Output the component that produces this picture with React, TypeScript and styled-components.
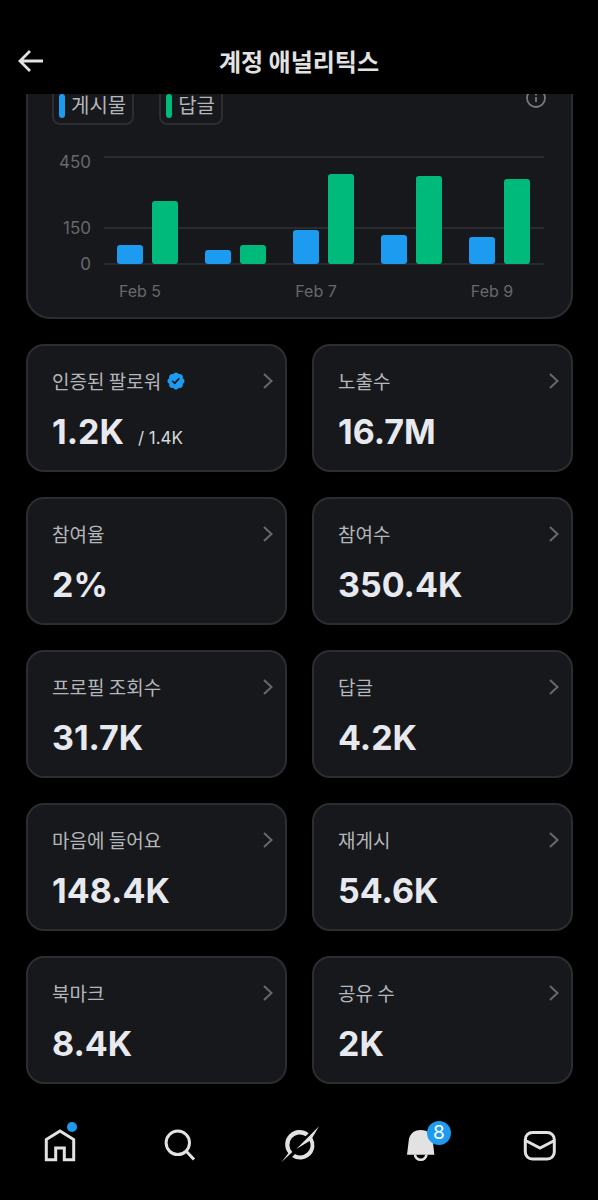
import React from "react";
import styled, { createGlobalStyle } from "styled-components";

const BLUE = "#1d9bf0";
const GREEN = "#00ba7c";

const GlobalStyle = createGlobalStyle`
  *, *::before, *::after { box-sizing: border-box; }
  body {
    margin: 0;
    background: #000;
    color: #e7e9ea;
    font-family: Inter, "Noto Sans CJK KR", sans-serif;
  }
  a { color: inherit; text-decoration: none; }
`;

const Screen = styled.div`
  display: flex;
  flex-direction: column;
  min-height: 100vh;
`;

const Header = styled.header`
  position: relative;
  z-index: 1;
  display: grid;
  grid-template-columns: 44px 1fr 44px;
  align-items: center;
  padding: 27px 9px 0;
  height: 94px;
  background: #000;
`;

const BackButton = styled.button`
  display: flex;
  align-items: center;
  justify-content: center;
  height: 44px;
  padding: 0;
  border: 0;
  background: none;
  color: #e2e2e2;
  cursor: pointer;
`;

const Title = styled.h1`
  margin: 0;
  font-family: "Noto Sans CJK KR", sans-serif;
  font-size: 24px;
  line-height: 32px;
  font-weight: 700;
  text-align: center;
  color: #e2e2e2;
`;

const Content = styled.main`
  flex: 1;
  overflow: hidden;
  padding: 0 25px 0 26px;
`;

const Panel = styled.section`
  margin-top: -33px;
  padding: 24px 24px 16px;
  border: 2px solid #2c2d31;
  border-radius: 24px;
  background: #17181c;
`;

const Legend = styled.div`
  display: flex;
  align-items: flex-start;
  gap: 25px;
`;

const Chip = styled.span`
  display: flex;
  align-items: center;
  gap: 6px;
  height: 38px;
  padding: 0 6px 0 5px;
  border: 2px solid #2c2d31;
  border-radius: 8px;
  font-size: 20px;
  line-height: 28px;
  color: #b4b6ba;
`;

const Swatch = styled.span<{ $color: string }>`
  width: 6px;
  height: 24px;
  border-radius: 3px;
  background: ${(p) => p.$color};
`;

const InfoButton = styled.button`
  display: flex;
  margin-left: auto;
  padding: 0;
  border: 0;
  background: none;
  color: #77797e;
  cursor: pointer;
`;

const Chart = styled.figure`
  display: grid;
  grid-template-columns: 39px 1fr;
  column-gap: 13px;
  margin: 32px 3px 0 0;
`;

const Axis = styled.div`
  position: relative;
  height: 107px;
`;

const Tick = styled.span<{ $value: number }>`
  position: absolute;
  right: 0;
  bottom: ${(p) => (p.$value / 450) * 100}%;
  margin-bottom: -10px;
  font-size: 17px;
  line-height: 20px;
  color: #66686d;

  &:first-child { margin-bottom: -15px; }
`;

const Plot = styled.div`
  position: relative;
  display: flex;
  height: 107px;
`;

const GridLine = styled.span<{ $value: number }>`
  position: absolute;
  left: 0;
  right: 0;
  bottom: ${(p) => (p.$value / 450) * 100}%;
  height: 2px;
  margin-bottom: -1px;
  background: #2a2b2f;
`;

const Group = styled.div`
  position: relative;
  flex: 1;
  display: flex;
  align-items: flex-end;
  justify-content: center;
  gap: 9px;
  padding-right: 1px;
`;

const Bar = styled.span<{ $color: string }>`
  width: 26px;
  border-radius: 3px;
  background: ${(p) => p.$color};
`;

const Dates = styled.div`
  grid-column: 2;
  display: flex;
  margin-top: 17px;
`;

const DateLabel = styled.span`
  flex: 1;
  padding-right: 16px;
  font-size: 16px;
  line-height: 20px;
  text-align: center;
  white-space: nowrap;
  color: #66686d;
`;

const Grid = styled.div`
  display: grid;
  grid-template-columns: 1fr 1fr;
  gap: 25px;
  margin-top: 25px;
`;

const Card = styled.a`
  display: flex;
  flex-direction: column;
  gap: 19px;
  padding: 23px 11px 18px 24px;
  border: 2px solid #2c2d31;
  border-radius: 18px;
  background: #17181c;
`;

const CardHead = styled.span`
  display: flex;
  align-items: center;
  gap: 5px;
  font-family: "Noto Sans CJK KR", sans-serif;
  font-size: 19px;
  line-height: 24px;
  color: #b4b6ba;
`;

const Chevron = styled.svg`
  margin-left: auto;
  color: #66686d;
`;

const Figures = styled.span`
  display: flex;
  align-items: baseline;
  gap: 14px;
`;

const Value = styled.strong`
  font-size: 34px;
  line-height: 40px;
  font-weight: 700;
  color: #e7e9ee;
`;

const Total = styled.span`
  font-size: 17px;
  line-height: 20px;
  color: #d6d8dc;
`;

const TabBar = styled.nav`
  display: flex;
  justify-content: space-between;
  height: 110px;
  padding: 0 38px 0 40px;
`;

const Tab = styled.a`
  display: flex;
  align-items: center;
  justify-content: center;
  color: #e2e2e2;
`;

const IconBox = styled.span`
  position: relative;
  display: flex;
`;

const Dot = styled.span`
  position: absolute;
  top: -3px;
  right: 3px;
  width: 10px;
  height: 10px;
  border-radius: 50%;
  background: ${BLUE};
`;

const Badge = styled.span`
  position: absolute;
  top: -4px;
  right: -11px;
  width: 24px;
  height: 24px;
  border-radius: 50%;
  background: ${BLUE};
  color: #fff;
  font-size: 19px;
  line-height: 24px;
  text-align: center;
`;

const days = [
  { label: "Feb 5", posts: 82, replies: 267 },
  { label: "", posts: 57, replies: 82 },
  { label: "Feb 7", posts: 144, replies: 378 },
  { label: "", posts: 124, replies: 369 },
  { label: "Feb 9", posts: 112, replies: 357 },
];

const ticks = [450, 150, 0];

interface Metric {
  label: string;
  value: string;
  total?: string;
  verified?: boolean;
}

const metrics: Metric[] = [
  { label: "인증된 팔로워", value: "1.2K", total: "/ 1.4K", verified: true },
  { label: "노출수", value: "16.7M" },
  { label: "참여율", value: "2%" },
  { label: "참여수", value: "350.4K" },
  { label: "프로필 조회수", value: "31.7K" },
  { label: "답글", value: "4.2K" },
  { label: "마음에 들어요", value: "148.4K" },
  { label: "재게시", value: "54.6K" },
  { label: "북마크", value: "8.4K" },
  { label: "공유 수", value: "2K" },
];

const VerifiedIcon = () => (
  <svg width="20" height="20" viewBox="0 0 24 24" fill={BLUE} aria-label="인증됨">
    <path d="M22.25 12c0-1.43-.88-2.67-2.19-3.34.46-1.39.2-2.9-.81-3.91s-2.52-1.27-3.91-.81c-.66-1.31-1.91-2.19-3.34-2.19s-2.67.88-3.33 2.19c-1.4-.46-2.91-.2-3.92.81s-1.26 2.52-.8 3.91c-1.31.67-2.2 1.91-2.2 3.34s.89 2.67 2.2 3.34c-.46 1.39-.21 2.9.8 3.91s2.52 1.26 3.91.81c.67 1.31 1.91 2.19 3.34 2.19s2.68-.88 3.34-2.19c1.39.45 2.9.2 3.91-.81s1.27-2.52.81-3.91c1.31-.67 2.19-1.91 2.19-3.34zm-11.71 4.2L6.8 12.46l1.41-1.42 2.26 2.26 4.8-5.23 1.47 1.36-6.2 6.77z" />
  </svg>
);

const HomeIcon = () => (
  <svg width="40" height="40" viewBox="0 0 40 40" fill="none" stroke="currentColor" strokeWidth="3">
    <path d="M6.300 14.500L20 6l13.700 8.500v20.200H24.300V23H15.700v11.700H6.300z" />
  </svg>
);

const SearchIcon = () => (
  <svg width="40" height="40" viewBox="0 0 40 40" fill="none" stroke="currentColor" strokeWidth="3">
    <circle cx="17.800" cy="17.800" r="11.700" />
    <path d="M26 26L34 34.500" />
  </svg>
);

const GrokIcon = () => (
  <svg width="40" height="40" viewBox="61 46 120 120" fill="currentColor">
    <path d="M147 71A43 43 0 0 0 86 131L65 158L98 127A31 31 0 0 1 138 80Z" />
    <path d="M178 50L110 118L150 94A31 31 0 0 1 106 133L97 142A43 43 0 0 0 158 84Z" />
  </svg>
);

const BellIcon = () => (
  <svg width="40" height="40" viewBox="0 0 40 40">
    <path d="M20.700 5C13.500 5 9.200 9.700 8.700 15.700L7 29.700H34.400L32.700 15.700C32.200 9.700 27.900 5 20.700 5z" fill="currentColor" />
    <path d="M15 29.500a5.700 5.200 0 0 0 11.400 0" fill="none" stroke="currentColor" strokeWidth="2.600" />
  </svg>
);

const MailIcon = () => (
  <svg width="40" height="40" viewBox="0 0 40 40" fill="none" stroke="currentColor" strokeWidth="3">
    <rect x="5.300" y="7.500" width="29" height="26.500" rx="7" />
    <path d="M5.500 15.500L20 23L34.500 15.500" />
  </svg>
);

export default function App() {
  return (
    <>
      <GlobalStyle />
      <Screen>
        <Header>
          <BackButton aria-label="뒤로">
            <svg width="28" height="28" viewBox="0 0 28 28" fill="none" stroke="currentColor" strokeWidth="2.800">
              <path d="M26 14H3M13 4L3 14l10 10" />
            </svg>
          </BackButton>
          <Title>계정 애널리틱스</Title>
        </Header>

        <Content>
          <Panel>
            <Legend>
              <Chip><Swatch $color={BLUE} />게시물</Chip>
              <Chip><Swatch $color={GREEN} />답글</Chip>
              <InfoButton aria-label="정보">
                <svg width="22" height="22" viewBox="0 0 22 22" fill="none" stroke="currentColor" strokeWidth="1.800">
                  <circle cx="11" cy="11" r="9" />
                  <path d="M11 10v5M11 6.500v2" />
                </svg>
              </InfoButton>
            </Legend>
            <Chart>
              <Axis>
                {ticks.map((t) => <Tick key={t} $value={t}>{t}</Tick>)}
              </Axis>
              <Plot>
                {ticks.map((t) => <GridLine key={t} $value={t} />)}
                {days.map((d, i) => (
                  <Group key={i}>
                    <Bar $color={BLUE} style={{ height: `${(d.posts / 450) * 100}%` }} />
                    <Bar $color={GREEN} style={{ height: `${(d.replies / 450) * 100}%` }} />
                  </Group>
                ))}
              </Plot>
              <Dates>
                {days.map((d, i) => <DateLabel key={i}>{d.label}</DateLabel>)}
              </Dates>
            </Chart>
          </Panel>

          <Grid>
            {metrics.map((m) => (
              <Card key={m.label} href="#">
                <CardHead>
                  {m.label}
                  {m.verified && <VerifiedIcon />}
                  <Chevron width="12" height="18" viewBox="0 0 12 18" fill="none" stroke="currentColor" strokeWidth="2">
                    <path d="M2 2l7.500 7L2 16" />
                  </Chevron>
                </CardHead>
                <Figures>
                  <Value>{m.value}</Value>
                  {m.total && <Total>{m.total}</Total>}
                </Figures>
              </Card>
            ))}
          </Grid>
        </Content>

        <TabBar>
          <Tab href="#" aria-label="홈"><IconBox><HomeIcon /><Dot /></IconBox></Tab>
          <Tab href="#" aria-label="검색"><SearchIcon /></Tab>
          <Tab href="#" aria-label="Grok"><GrokIcon /></Tab>
          <Tab href="#" aria-label="알림"><IconBox><BellIcon /><Badge>8</Badge></IconBox></Tab>
          <Tab href="#" aria-label="쪽지"><MailIcon /></Tab>
        </TabBar>
      </Screen>
    </>
  );
}
